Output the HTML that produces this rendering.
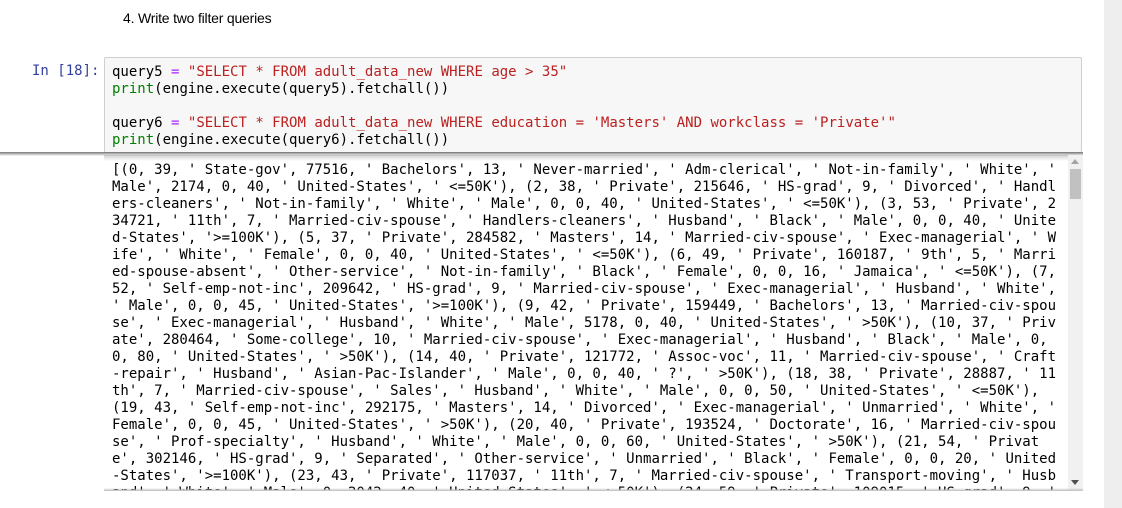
<!DOCTYPE html>
<html><head><meta charset="utf-8"><style>
html,body{margin:0;padding:0;width:1122px;height:508px;overflow:hidden;background:#fff;position:relative}
.side{position:absolute;left:1104px;top:0;width:18px;height:508px;background:#eeeeee}
.md{position:absolute;left:123px;top:10px;font:14px "Liberation Sans",sans-serif;color:#000;letter-spacing:-0.2px}
.prompt{position:absolute;left:32px;top:63px;font:14px "DejaVu Sans Mono",monospace;color:#303f9f;line-height:17px}
.in{position:absolute;left:104px;top:57px;width:978px;height:96px;background:#f7f7f7;border:1px solid #cfcfcf;border-radius:2px;box-sizing:border-box}
pre{margin:0;font:14px/17px "DejaVu Sans Mono",monospace;color:#000}
.code{position:absolute;left:112px;top:64px}
.s{color:#ba2121}.o{color:#aa22ff}.g{color:#008000}
.shadow{position:absolute;left:0;top:152px;width:1083px;height:4px;background:linear-gradient(#777,rgba(0,0,0,0));}
.out{position:absolute;left:104px;top:155px;width:979px;height:335px;overflow:hidden}
.out pre{position:absolute;left:8px;top:7px}
.tsh{position:absolute;left:104px;top:155px;width:979px;height:6px;background:linear-gradient(rgba(0,0,0,.18),rgba(0,0,0,0))}
.sb{position:absolute;left:1068px;top:155px;width:15px;height:335px;background:#f1f1f1}
.thumb{position:absolute;left:1070px;top:169px;width:11px;height:30px;background:#c1c1c1}
.bshadow{position:absolute;left:104px;top:488px;width:979px;height:3px;background:linear-gradient(rgba(0,0,0,0),#bbb)}
</style></head><body>
<div class="side"></div>
<div class="md">4. Write two filter queries</div>
<div class="prompt">In [18]:</div>
<div class="in"></div>
<pre class="code">query5 <span class="o">=</span> <span class="s">"SELECT * FROM adult_data_new WHERE age &gt; 35"</span>
<span class="g">print</span>(engine.execute(query5).fetchall())

query6 <span class="o">=</span> <span class="s">"SELECT * FROM adult_data_new WHERE education = 'Masters' AND workclass = 'Private'"</span>
<span class="g">print</span>(engine.execute(query6).fetchall())</pre>
<div class="shadow"></div>
<div class="out"><pre>[(0, 39, ' State-gov', 77516, ' Bachelors', 13, ' Never-married', ' Adm-clerical', ' Not-in-family', ' White', '
Male', 2174, 0, 40, ' United-States', ' &lt;=50K'), (2, 38, ' Private', 215646, ' HS-grad', 9, ' Divorced', ' Handl
ers-cleaners', ' Not-in-family', ' White', ' Male', 0, 0, 40, ' United-States', ' &lt;=50K'), (3, 53, ' Private', 2
34721, ' 11th', 7, ' Married-civ-spouse', ' Handlers-cleaners', ' Husband', ' Black', ' Male', 0, 0, 40, ' Unite
d-States', '&gt;=100K'), (5, 37, ' Private', 284582, ' Masters', 14, ' Married-civ-spouse', ' Exec-managerial', ' W
ife', ' White', ' Female', 0, 0, 40, ' United-States', ' &lt;=50K'), (6, 49, ' Private', 160187, ' 9th', 5, ' Marri
ed-spouse-absent', ' Other-service', ' Not-in-family', ' Black', ' Female', 0, 0, 16, ' Jamaica', ' &lt;=50K'), (7,
52, ' Self-emp-not-inc', 209642, ' HS-grad', 9, ' Married-civ-spouse', ' Exec-managerial', ' Husband', ' White',
' Male', 0, 0, 45, ' United-States', '&gt;=100K'), (9, 42, ' Private', 159449, ' Bachelors', 13, ' Married-civ-spou
se', ' Exec-managerial', ' Husband', ' White', ' Male', 5178, 0, 40, ' United-States', ' &gt;50K'), (10, 37, ' Priv
ate', 280464, ' Some-college', 10, ' Married-civ-spouse', ' Exec-managerial', ' Husband', ' Black', ' Male', 0,
0, 80, ' United-States', ' &gt;50K'), (14, 40, ' Private', 121772, ' Assoc-voc', 11, ' Married-civ-spouse', ' Craft
-repair', ' Husband', ' Asian-Pac-Islander', ' Male', 0, 0, 40, ' ?', ' &gt;50K'), (18, 38, ' Private', 28887, ' 11
th', 7, ' Married-civ-spouse', ' Sales', ' Husband', ' White', ' Male', 0, 0, 50, ' United-States', ' &lt;=50K'),
(19, 43, ' Self-emp-not-inc', 292175, ' Masters', 14, ' Divorced', ' Exec-managerial', ' Unmarried', ' White', '
Female', 0, 0, 45, ' United-States', ' &gt;50K'), (20, 40, ' Private', 193524, ' Doctorate', 16, ' Married-civ-spou
se', ' Prof-specialty', ' Husband', ' White', ' Male', 0, 0, 60, ' United-States', ' &gt;50K'), (21, 54, ' Privat
e', 302146, ' HS-grad', 9, ' Separated', ' Other-service', ' Unmarried', ' Black', ' Female', 0, 0, 20, ' United
-States', '&gt;=100K'), (23, 43, ' Private', 117037, ' 11th', 7, ' Married-civ-spouse', ' Transport-moving', ' Husb
and', ' White', ' Male', 0, 2042, 40, ' United-States', ' &lt;=50K'), (24, 59, ' Private', 109015, ' HS-grad', 9, '</pre></div>
<div class="tsh"></div>
<div class="sb"></div>
<div class="thumb"></div>
<div style="position:absolute;left:1071px;top:159px;width:0;height:0;border-left:4px solid transparent;border-right:4px solid transparent;border-bottom:5px solid #a3a3a3"></div>
<div style="position:absolute;left:1071px;top:480px;width:0;height:0;border-left:4px solid transparent;border-right:4px solid transparent;border-top:5px solid #505050"></div>
<div class="bshadow"></div>
</body></html>
